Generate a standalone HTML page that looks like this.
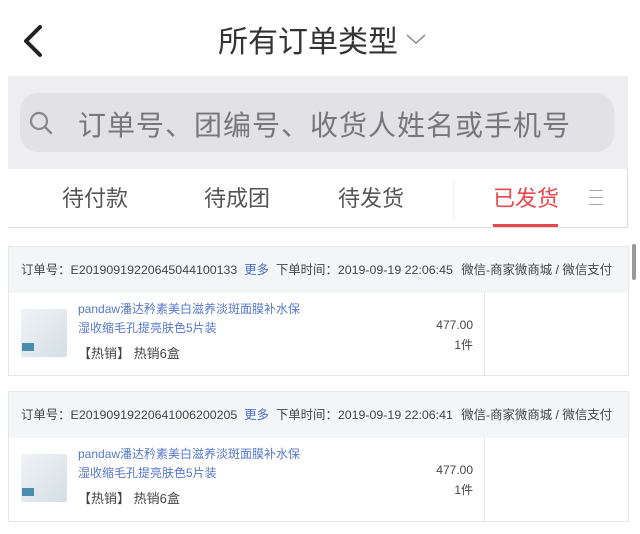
<!DOCTYPE html>
<html><head><meta charset="utf-8"><style>
*{margin:0;padding:0;box-sizing:border-box}
body{width:640px;height:534px;background:#fff;font-family:"Liberation Sans","Noto Sans CJK SC",sans-serif;position:relative;overflow:hidden;color:#333}
.a{position:absolute}
.title{left:218px;top:17px;font-size:30px;color:#333;letter-spacing:0px}
.band{left:8px;top:76px;width:620px;height:93px;background:#eeeef0}
.pill{left:20px;top:93px;width:594px;height:59px;background:#e2e2e6;border-radius:18px}
.ph{left:78px;top:104px;font-size:28px;color:#777;letter-spacing:1px}
.tabs{left:8px;top:169px;width:620px;height:59px;background:#fff;border-bottom:1px solid #ddd;border-right:1px solid #ddd}
.tab{top:181px;font-size:22px;color:#555}
.card{left:8px;width:621px;border:1px solid #e6e6e6;background:#fff}
.hd{background:#f4f5f7;height:46px;font-size:12.4px;color:#444;padding:0 0 0 12px;line-height:46px;position:relative;white-space:nowrap}
.bd{position:relative;height:82px}
.vl{position:absolute;left:475px;top:0;bottom:0;border-left:1px solid #e6e6e6}
.nm{position:absolute;left:69px;top:7px;font-size:12px;color:#5577cc;line-height:19px}
.tg{position:absolute;left:69px;top:50px;font-size:13px;color:#444}
.pr{position:absolute;right:155px;top:22px;font-size:12px;color:#444;text-align:right;line-height:20px}
.img{position:absolute;left:12px;top:16px;width:46px;height:48px;background:linear-gradient(135deg,#f0f3f6,#d5dfe6);border-radius:2px}
.img:after{content:"";position:absolute;left:1px;bottom:6px;width:12px;height:8px;background:#4a8cae}
</style></head><body>
<svg class="a" style="left:20px;top:24px" width="26" height="34" viewBox="0 0 26 34"><path d="M20 3 L6 17 L20 31" fill="none" stroke="#222" stroke-width="4" stroke-linecap="round" stroke-linejoin="round"/></svg>
<div class="a title">所有订单类型</div>
<svg class="a" style="left:405px;top:32px" width="22" height="14" viewBox="0 0 22 14"><path d="M2 3 L11 11 L20 3" fill="none" stroke="#888" stroke-width="1.5"/></svg>
<div class="a band"></div>
<div class="a pill"></div>
<svg class="a" style="left:28px;top:110px" width="26" height="26" viewBox="0 0 26 26"><circle cx="11" cy="11" r="8" fill="none" stroke="#888" stroke-width="2.2"/><path d="M17 17 L23 23" stroke="#888" stroke-width="2.4" stroke-linecap="round"/></svg>
<div class="a ph">订单号、团编号、收货人姓名或手机号</div>
<div class="a tabs"></div>
<div class="a tab" style="left:62px">待付款</div>
<div class="a tab" style="left:204px">待成团</div>
<div class="a tab" style="left:338px">待发货</div>
<div class="a" style="left:453px;top:180px;width:1px;height:40px;background:#f0f0f0"></div>
<div class="a tab" style="left:493px;color:#e8474c">已发货</div>
<div class="a" style="left:493px;top:224px;width:65px;height:3px;background:#e8474c"></div>
<div class="a" style="left:589px;top:190px;width:14px;height:1px;background:#aaa"></div>
<div class="a" style="left:589px;top:197px;width:14px;height:1px;background:#aaa"></div>
<div class="a" style="left:589px;top:204px;width:14px;height:1px;background:#aaa"></div>
<div class="a" style="left:632px;top:244px;width:4px;height:36px;background:#999;border-radius:2px"></div>

<div class="a card" style="top:246px">
<div class="hd">订单号：E20190919220645044100133 <span style="color:#4a6fc8">&nbsp;更多</span>&nbsp; 下单时间：2019-09-19 22:06:45 <span style="position:absolute;right:16px">微信-商家微商城 / 微信支付</span></div>
<div class="bd"><div class="img"></div><div class="nm">pandaw潘达矜素美白滋养淡斑面膜补水保<br>湿收缩毛孔提亮肤色5片装</div><div class="tg">【热销】 热销6盒</div><div class="pr">477.00<br>1件</div><div class="vl"></div></div>
</div>

<div class="a card" style="top:391px">
<div class="hd">订单号：E20190919220641006200205 <span style="color:#4a6fc8">&nbsp;更多</span>&nbsp; 下单时间：2019-09-19 22:06:41 <span style="position:absolute;right:16px">微信-商家微商城 / 微信支付</span></div>
<div class="bd" style="height:83px"><div class="img"></div><div class="nm">pandaw潘达矜素美白滋养淡斑面膜补水保<br>湿收缩毛孔提亮肤色5片装</div><div class="tg">【热销】 热销6盒</div><div class="pr">477.00<br>1件</div><div class="vl"></div></div>
</div>
</body></html>
